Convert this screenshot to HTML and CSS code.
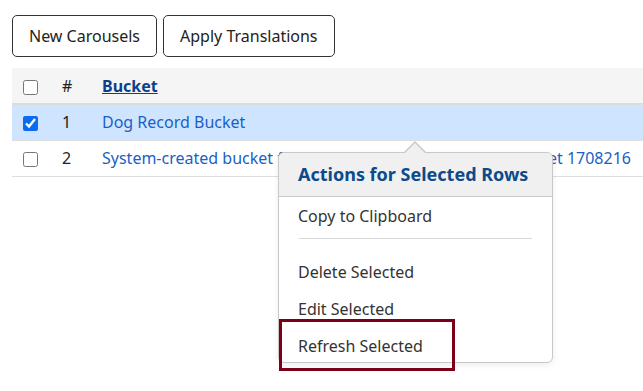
FILE: index.html
```html
<!DOCTYPE html>
<html lang="en">
<head>
    <meta charset="UTF-8">
    <title>Buckets</title>
    <link rel="stylesheet" href="styles.css">
</head>
<body>
    <div class="toolbar">
        <button class="btn">New Carousels</button>
        <button class="btn">Apply Translations</button>
    </div>

    <div class="table-wrap">
        <table class="grid">
            <thead>
                <tr>
                    <th class="col-check"><input type="checkbox"></th>
                    <th class="col-num">#</th>
                    <th><a href="#" class="sort-link">Bucket</a></th>
                </tr>
            </thead>
            <tbody>
                <tr class="selected">
                    <td class="col-check"><input type="checkbox" checked></td>
                    <td class="col-num">1</td>
                    <td><a href="#" class="row-link">Dog Record Bucket</a></td>
                </tr>
                <tr>
                    <td class="col-check"><input type="checkbox"></td>
                    <td class="col-num">2</td>
                    <td><a href="#" class="row-link">System-created bucket for Carousels Translations Dog Bucket 1708216</a></td>
                </tr>
            </tbody>
        </table>

        <div class="popover">
            <div class="popover-title">Actions for Selected Rows</div>
            <ul class="popover-menu">
                <li>Copy to Clipboard</li>
                <li class="divider"></li>
                <li>Delete Selected</li>
                <li>Edit Selected</li>
                <li class="marked">Refresh Selected</li>
            </ul>
        </div>
    </div>
</body>
</html>
```

FILE: styles.css
```css
* {
    box-sizing: border-box;
}

body {
    margin: 0;
    min-height: 100vh;
    padding: 15px 0 0 12px;
    font-family: "Segoe UI", "Noto Sans", sans-serif;
    font-size: 16px;
    color: #222;
    background: #fff;
}

.toolbar {
    display: flex;
    gap: 6px;
    margin-bottom: 11px;
}

.btn {
    font-family: inherit;
    font-size: 16px;
    color: #222;
    background: #fff;
    border: 1px solid #333;
    border-radius: 5px;
    height: 42px;
    padding: 0 16px;
}

.table-wrap {
    position: relative;
    width: 631px;
}

.grid {
    width: 100%;
    border-collapse: collapse;
}

.grid th,
.grid td {
    text-align: left;
    height: 36px;
    padding: 0;
    vertical-align: middle;
}

.grid thead tr {
    background: #f5f5f5;
    border-bottom: 2px solid #dcdcdc;
}

.grid th {
    font-weight: 400;
}

.grid tbody tr {
    border-bottom: 1px solid #dedede;
}

.grid tr.selected {
    background: #cfe5ff;
}

.col-check {
    width: 50px;
    padding-left: 11px !important;
}

.col-num {
    width: 40px;
}

input[type="checkbox"] {
    width: 15px;
    height: 15px;
    margin: 0;
    accent-color: #0b6cf0;
    vertical-align: middle;
}

.sort-link {
    color: #0c3f8c;
    font-weight: 700;
    text-decoration: underline;
}

.row-link {
    color: #1a5fc4;
    text-decoration: none;
    white-space: nowrap;
}

.popover {
    position: absolute;
    left: 266px;
    top: 84px;
    width: 275px;
    background: #fff;
    border: 1px solid #c8c8c8;
    border-radius: 6px;
    box-shadow: 0 2px 6px rgba(0, 0, 0, 0.08);
}

.popover::before,
.popover::after {
    content: "";
    position: absolute;
    left: 125px;
    width: 0;
    height: 0;
    border: 11px solid transparent;
    border-top: 0;
}

.popover::before {
    top: -12px;
    border-bottom: 11px solid #c8c8c8;
}

.popover::after {
    top: -10px;
    border-bottom: 11px solid #f0f0f0;
}

.popover-title {
    background: #f0f0f0;
    border-bottom: 1px solid #c8c8c8;
    border-radius: 6px 6px 0 0;
    color: #0c4a8c;
    font-weight: 700;
    font-size: 18px;
    white-space: nowrap;
    padding: 0 19px;
    height: 44px;
    line-height: 43px;
}

.popover-menu {
    list-style: none;
    margin: 0;
    padding: 1px 0 0;
}

.popover-menu li {
    padding: 0 19px;
    height: 37px;
    line-height: 37px;
    color: #333;
}

.popover-menu li.divider {
    height: 1px;
    margin: 3px 20px 15px;
    padding: 0;
    background: #d8d8d8;
}

.popover-menu li.marked {
    position: relative;
    height: 34px;
}

.popover-menu li.marked::after {
    content: "";
    position: absolute;
    left: 0;
    top: -9px;
    width: 170px;
    height: 46px;
    border: 3px solid #7d0019;
}
```
